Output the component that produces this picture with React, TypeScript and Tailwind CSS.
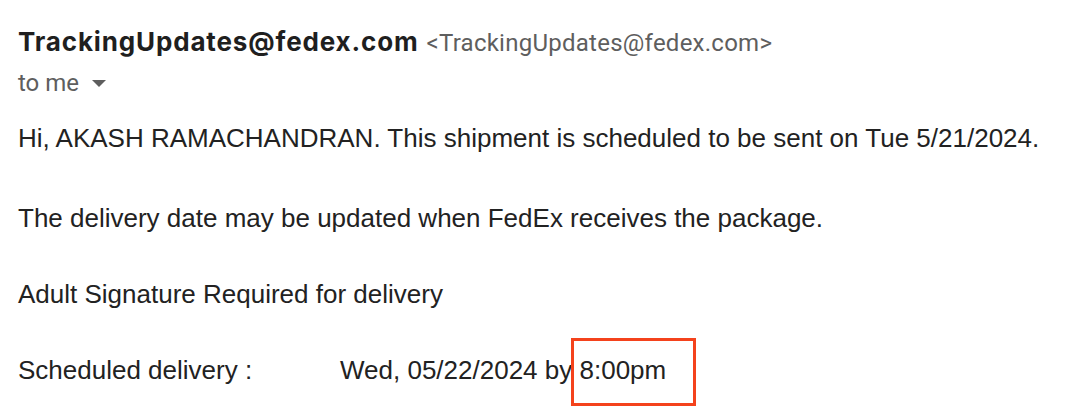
import React from "react";

export default function App() {
  return (
    <div className="w-[1074px] h-[414px] bg-white overflow-hidden relative">
      <div className="pl-[18px] pt-[24px]">
        <div className="flex items-baseline gap-[8px] leading-[36px]">
          <span
            className="text-[26px] font-bold text-[#1f1f1f] tracking-[0.85px]"
            style={{ fontFamily: "Inter, Roboto, sans-serif" }}
          >
            TrackingUpdates@fedex.com
          </span>
          <span
            className="text-[24px] text-[#5e5e5e] tracking-[0.25px]"
            style={{ fontFamily: "Roboto, sans-serif" }}
          >
            &lt;TrackingUpdates@fedex.com&gt;
          </span>
        </div>
        <div
          className="flex items-center gap-[13px] mt-[6px] text-[24px] text-[#5e5e5e] leading-[32px]"
          style={{ fontFamily: "Roboto, sans-serif" }}
        >
          <span>to me</span>
          <svg width="14" height="8" viewBox="0 0 14 8" className="mt-[2px]">
            <path d="M0 0 L14 0 L7 7 Z" fill="#5e5e5e" />
          </svg>
        </div>
        <div
          className="mt-[23px] text-[26px] text-[#222222] leading-[32px]"
          style={{ fontFamily: "'Liberation Sans', Arial, sans-serif" }}
        >
          <p>Hi, AKASH RAMACHANDRAN. This shipment is scheduled to be sent on Tue 5/21/2024.</p>
          <p className="mt-[48px]">The delivery date may be updated when FedEx receives the package.</p>
          <p className="mt-[44px]">Adult Signature Required for delivery</p>
          <div className="mt-[44px] flex">
            <span className="w-[322px]">Scheduled delivery :</span>
            <span>
              Wed, 05/22/2024 by{" "}
              <span className="relative">
                8:00pm
                <span className="absolute left-[-8px] top-[-17px] w-[125px] h-[68px] border-[3px] border-[#f4421c]" />
              </span>
            </span>
          </div>
        </div>
      </div>
    </div>
  );
}
